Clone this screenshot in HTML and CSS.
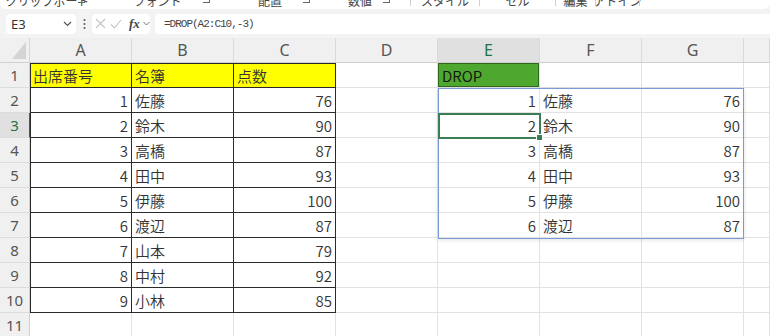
FILE: index.html
```html
<!DOCTYPE html>
<html lang="ja">
<head>
  <meta charset="UTF-8">
  <title>DROP関数</title>
  <link rel="stylesheet" href="styles.css">
</head>
<body>

  <div class="ribbon">
    <div class="grp g1"><span>クリップボード</span><i class="launch"></i></div>
    <div class="grp g2"><span>フォント</span><i class="launch"></i></div>
    <div class="grp g3"><span>配置</span><i class="launch"></i></div>
    <div class="grp g4"><span>数値</span><i class="launch"></i></div>
    <div class="grp g5 sep"><span>スタイル</span></div>
    <div class="grp g6 sep"><span>セル</span></div>
    <div class="grp g7 sep"><span>編集</span></div>
    <div class="grp g8 sep"><span>アドイン</span></div>
    <div class="grp g9 sep"></div>
  </div>

  <div class="fbar">
    <div class="namebox">
      <span>E3</span>
      <svg width="9" height="6" viewBox="0 0 9 6"><path d="M1 1l3.5 3.5L8 1" fill="none" stroke="#555" stroke-width="1.2"/></svg>
    </div>
    <div class="dots">
      <svg width="3" height="12" viewBox="0 0 3 12"><circle cx="1.5" cy="2" r="1.1" fill="#666"/><circle cx="1.5" cy="6" r="1.1" fill="#666"/><circle cx="1.5" cy="10" r="1.1" fill="#666"/></svg>
    </div>
    <div class="fxbox">
      <svg class="x" width="11" height="11" viewBox="0 0 11 11"><path d="M1 1l9 9M10 1l-9 9" stroke="#c4c4c4" stroke-width="1.1"/></svg>
      <svg class="ok" width="12" height="10" viewBox="0 0 12 10"><path d="M1 5.5l3.5 3.5L11 1" fill="none" stroke="#c4c4c4" stroke-width="1.1"/></svg>
      <span class="fx">fx</span>
      <svg width="7" height="5" viewBox="0 0 7 5"><path d="M0.5 1l3 3 3-3" fill="none" stroke="#777" stroke-width="1"/></svg>
    </div>
    <div class="formula">=DROP(A2:C10,-3)</div>
  </div>

  <div class="sheet-wrap">
    <div class="sheet">
      <div class="corner"><i></i></div>
      <div class="ch">A</div><div class="ch">B</div><div class="ch">C</div><div class="ch">D</div>
      <div class="ch hl">E</div><div class="ch">F</div><div class="ch">G</div><div class="ch"></div>

      <div class="rh">1</div>
      <div class="c t ta top y">出席番号</div><div class="c t top y">名簿</div><div class="c t top y">点数</div>
      <div class="c"></div><div class="c drop">DROP</div><div class="c"></div><div class="c"></div><div class="c"></div>

      <div class="rh">2</div>
      <div class="c t ta n">1</div><div class="c t">佐藤</div><div class="c t n">76</div>
      <div class="c"></div><div class="c n">1</div><div class="c">佐藤</div><div class="c n">76</div><div class="c"></div>

      <div class="rh hl">3</div>
      <div class="c t ta n">2</div><div class="c t">鈴木</div><div class="c t n">90</div>
      <div class="c"></div><div class="c n">2</div><div class="c">鈴木</div><div class="c n">90</div><div class="c"></div>

      <div class="rh">4</div>
      <div class="c t ta n">3</div><div class="c t">高橋</div><div class="c t n">87</div>
      <div class="c"></div><div class="c n">3</div><div class="c">高橋</div><div class="c n">87</div><div class="c"></div>

      <div class="rh">5</div>
      <div class="c t ta n">4</div><div class="c t">田中</div><div class="c t n">93</div>
      <div class="c"></div><div class="c n">4</div><div class="c">田中</div><div class="c n">93</div><div class="c"></div>

      <div class="rh">6</div>
      <div class="c t ta n">5</div><div class="c t">伊藤</div><div class="c t n">100</div>
      <div class="c"></div><div class="c n">5</div><div class="c">伊藤</div><div class="c n">100</div><div class="c"></div>

      <div class="rh">7</div>
      <div class="c t ta n">6</div><div class="c t">渡辺</div><div class="c t n">87</div>
      <div class="c"></div><div class="c n">6</div><div class="c">渡辺</div><div class="c n">87</div><div class="c"></div>

      <div class="rh">8</div>
      <div class="c t ta n">7</div><div class="c t">山本</div><div class="c t n">79</div>
      <div class="c"></div><div class="c"></div><div class="c"></div><div class="c"></div><div class="c"></div>

      <div class="rh">9</div>
      <div class="c t ta n">8</div><div class="c t">中村</div><div class="c t n">92</div>
      <div class="c"></div><div class="c"></div><div class="c"></div><div class="c"></div><div class="c"></div>

      <div class="rh">10</div>
      <div class="c t ta n">9</div><div class="c t">小林</div><div class="c t n">85</div>
      <div class="c"></div><div class="c"></div><div class="c"></div><div class="c"></div><div class="c"></div>

      <div class="rh">11</div>
      <div class="c"></div><div class="c"></div><div class="c"></div>
      <div class="c"></div><div class="c"></div><div class="c"></div><div class="c"></div><div class="c"></div>
    </div>

    <!-- selection layer: same grid as the sheet -->
    <div class="sheet overlay">
      <div class="spill"></div>
      <div class="active"></div>
    </div>
  </div>

</body>
</html>
```

FILE: styles.css
```css
body {
  margin: 0;
  width: 770px;
  height: 336px;
  overflow: hidden;
  background: #f3f3f3;
  font-family: "Noto Sans CJK JP", "Noto Sans", sans-serif;
  color: #222;
}

/* ribbon: only the bottom edge of the group labels is visible */
.ribbon {
  height: 9px;
  background: #fff;
  display: flex;
  overflow: hidden;
  border-radius: 0 0 6px 6px;
}

.grp {
  position: relative;
  flex: none;
  display: flex;
  justify-content: center;
  height: 9px;
}

.grp span {
  font-size: 12px;
  line-height: 12px;
  margin-top: -5px;
  color: #444;
  white-space: nowrap;
}

.launch {
  position: absolute;
  right: 10px;
  top: -4px;
  width: 6px;
  height: 6px;
  border-right: 1px solid #666;
  border-bottom: 1px solid #666;
}

.sep {
  border-left: 1px solid #d0d0d0;
  height: 6px;
}

.g1 { width: 95px; }
.g2 { width: 125px; }
.g3 { width: 100px; }
.g4 { width: 80px; }
.g5 { width: 68px; margin-left: 10px; }
.g6 { width: 75px; }
.g7 { width: 39px; }
.g8 { width: 43px; }
.g9 { width: 30px; }

/* formula bar */
.fbar {
  height: 29px;
  display: flex;
  align-items: center;
  padding-left: 6px;
}

.fbar > * {
  flex: none;
}

.namebox {
  width: 70px;
  height: 20px;
  box-sizing: border-box;
  background: #fff;
  border-radius: 4px;
  display: flex;
  align-items: center;
  justify-content: space-between;
  padding: 0 4px 0 5px;
  font-family: "Noto Sans", sans-serif;
  font-size: 13px;
  color: #333;
}

.dots {
  width: 16px;
  display: flex;
  justify-content: center;
}

.fxbox {
  width: 58px;
  height: 20px;
  box-sizing: border-box;
  background: #fff;
  border-radius: 4px;
  display: flex;
  align-items: center;
  padding-left: 3px;
}

.fxbox .ok {
  margin-left: 4px;
}

.fx {
  font-family: "Liberation Serif", serif;
  font-style: italic;
  font-weight: bold;
  font-size: 13px;
  line-height: 1;
  color: #444;
  margin: 0 3px 0 7px;
}

.formula {
  flex: 1 1 auto;
  height: 20px;
  margin-left: 5px;
  background: #fff;
  border-radius: 4px 0 0 4px;
  padding-left: 9px;
  display: flex;
  align-items: center;
  font-family: "Liberation Mono", monospace;
  font-size: 11px;
  letter-spacing: -1px;
  color: #444;
}

/* sheet */
.sheet-wrap {
  display: grid;
}

.sheet {
  grid-area: 1 / 1;
  display: grid;
  grid-template-columns: 30px repeat(7, 102px) 1fr;
  grid-template-rows: repeat(12, 25px);
  background: #fff;
}

.sheet > div {
  box-sizing: border-box;
}

.overlay {
  background: transparent;
  pointer-events: none;
}

.corner {
  background: #f0f0f0;
  border-right: 1px solid #d6d6d6;
  border-bottom: 1px solid #d0d0d0;
  position: relative;
}

.corner i {
  position: absolute;
  right: 3px;
  bottom: 3px;
  width: 0;
  height: 0;
  border-left: 14px solid transparent;
  border-bottom: 17px solid #d4d4d4;
}

.ch {
  background: #f0f0f0;
  border-right: 1px solid #dadada;
  border-bottom: 1px solid #cfcfcf;
  display: flex;
  align-items: center;
  justify-content: center;
  font-family: "Noto Sans", sans-serif;
  font-size: 16px;
  color: #555;
}

.ch.hl {
  background: #e0e0e0;
  color: #217346;
}

.rh {
  background: #f0f0f0;
  border-right: 1px solid #d0d0d0;
  border-bottom: 1px solid #dcdcdc;
  display: flex;
  align-items: center;
  justify-content: center;
  font-family: "Noto Sans", sans-serif;
  font-size: 15px;
  color: #555;
}

.rh.hl {
  background: #e0e0e0;
  color: #217346;
  border-right-color: #217346;
}

.c {
  border-right: 1px solid #e2e2e2;
  border-bottom: 1px solid #e2e2e2;
  display: flex;
  align-items: center;
  padding: 0 3px;
  font-size: 15px;
  font-weight: 350;
  color: #333;
  white-space: nowrap;
}

.n {
  justify-content: flex-end;
}

.t {
  border-right-color: #2a2a2a;
  border-bottom-color: #2a2a2a;
}

.ta {
  box-shadow: inset 1px 0 #2a2a2a;
}

.top {
  box-shadow: inset 0 1px #2a2a2a;
}

.ta.top {
  box-shadow: inset 1px 0 #2a2a2a, inset 0 1px #2a2a2a;
}

.y {
  background: #ffff00;
}

.drop {
  background: #4ea72e;
  box-shadow: inset 0 0 0 1px #2f6a1c;
  color: #111;
  padding-left: 4px;
}

.spill {
  grid-column: 6 / 9;
  grid-row: 3 / 9;
  margin-bottom: -1px;
  border: 1px solid #7b9bd8;
  box-shadow: 0 1px 4px rgba(0, 0, 0, 0.12);
}

.active {
  grid-column: 6 / 7;
  grid-row: 4 / 5;
  margin: 0 -1px -1px 0;
  border: 2px solid #3b7d55;
  position: relative;
}

.active::after {
  content: "";
  position: absolute;
  right: -4px;
  bottom: -4px;
  width: 5px;
  height: 5px;
  background: #3b7d55;
  border: 1px solid #fff;
}
```
